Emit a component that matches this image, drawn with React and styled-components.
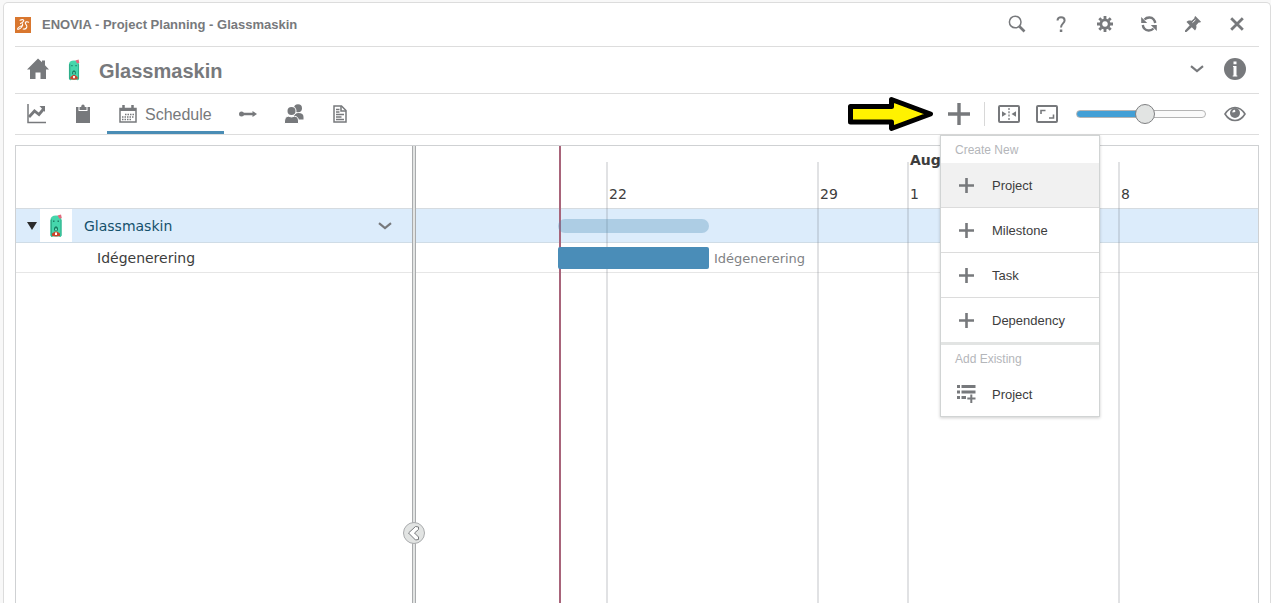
import React, { useState } from "react"
import styled, { createGlobalStyle } from "styled-components"

const GlobalStyle = createGlobalStyle`
  * {
    box-sizing: border-box;
  }

  body {
    margin: 0;
    background: #f8f8f8;
    color: #77797c;
    font-family: "Liberation Sans", Arial, sans-serif;
  }

  button {
    margin: 0;
    padding: 0;
    border: 0;
    background: none;
    color: inherit;
    font: inherit;
    cursor: pointer;
  }

  svg {
    display: block;
    flex: none;
  }
`

const Page = styled.div`
  display: flex;
  min-height: 100vh;
  padding: 2px 0 0 3px;
`

const Panel = styled.main`
  flex: 1;
  min-width: 0;
  display: flex;
  flex-direction: column;
  padding: 0 11px;
  background: #fff;
  border: 1px solid #dcdcdc;
  border-bottom: 0;
  border-radius: 5px 5px 0 0;
`

const Bar = styled.header`
  display: flex;
  align-items: center;
  height: ${props => props.$height}px;
  border-bottom: 1px solid #dddddd;
`

const AppTitle = styled.span`
  flex: 1;
  margin-left: 11px;
  font-size: 13px;
  font-weight: bold;
`

const BarButton = styled.button`
  display: flex;
  align-items: center;
  justify-content: center;
  width: 44px;
  height: 42px;
`

const PlainButton = styled.button`
  display: flex;
  align-items: center;
`

const Heading = styled.div`
  flex: 1;
  display: flex;
  align-items: center;
  gap: 18px;
  padding-left: 12px;
`

const PageTitle = styled.h1`
  margin: 0;
  font-size: 20px;
  line-height: 24px;
  padding-top: 2px;
`

const HeadingActions = styled.div`
  display: flex;
  align-items: center;
  gap: 20px;
  padding: 0 13px 2px 0;
`

const Tabs = styled.nav`
  flex: 1;
  display: flex;
  align-items: stretch;
  align-self: stretch;
  gap: 2px;
`

const Tab = styled.button`
  display: flex;
  align-items: center;
  justify-content: center;
  gap: 8px;
  min-width: 44px;
  padding: 2px ${props => (props.$active ? "12px" : "0")} 0;
  font-size: 16px;
  border-bottom: 3px solid
    ${props => (props.$active ? "#4a8db5" : "transparent")};
`

const TabText = styled.span`
  padding-top: 3px;
`

const Tools = styled.div`
  display: flex;
  align-items: center;
  padding-right: 13px;
`

const CreateWrap = styled.div`
  position: relative;
  margin: 0 14px;
`

const Divider = styled.span`
  width: 1px;
  height: 24px;
  margin-right: 13px;
  background: #d8d8d8;
`

const ToolGroup = styled.div`
  display: flex;
  align-items: center;
  gap: 16px;
`

const Slider = styled.input`
  appearance: none;
  width: 130px;
  height: 20px;
  margin: 0 2px;
  background: none;

  &::-webkit-slider-runnable-track {
    height: 8px;
    border: 1px solid #b4b4b4;
    border-radius: 4px;
    background: linear-gradient(
      to right,
      #429fd6 ${props => props.value}%,
      #fafafa ${props => props.value}%
    );
  }

  &::-webkit-slider-thumb {
    appearance: none;
    width: 20px;
    height: 20px;
    margin-top: -7px;
    border: 1px solid #7f8082;
    border-radius: 50%;
    background: #e2e4e3;
  }
`

const Menu = styled.div`
  position: absolute;
  z-index: 5;
  top: 32px;
  left: -8px;
  width: 160px;
  background: #fff;
  border: 1px solid #d1d4d4;
  box-shadow: 0 1px 3px rgba(0, 0, 0, 0.2);
`

const MenuSection = styled.section`
  & + & {
    border-top: 3px solid #e2e4e3;
  }
`

const MenuLabel = styled.h2`
  margin: 0;
  padding: 2px 0 0 14px;
  color: #b4b6ba;
  font-size: 12px;
  font-weight: normal;
  line-height: 25px;
`

const MenuItem = styled.button`
  display: flex;
  align-items: center;
  gap: 15px;
  width: 100%;
  height: ${props => (props.$last ? 44 : 45)}px;
  padding-left: 16px;
  color: #3d3d3d;
  font-size: 13px;
  background: ${props => (props.$active ? "#f1f1f1" : "none")};
  border-bottom: ${props => (props.$last ? "0" : "1px solid #dcdcdc")};

  svg {
    color: #77797c;
  }
`

const Chart = styled.section`
  flex: 1;
  display: flex;
  margin-top: 10px;
  color: #3d3d3d;
  font-family: "DejaVu Sans", Verdana, sans-serif;
  font-size: 13px;
  border: 1px solid #cfd1d3;
  border-bottom: 0;
`

const Tree = styled.div`
  width: 396px;
`

const TreeHead = styled.div`
  height: 63px;
  border-bottom: 1px solid #d5dbe0;
`

const Row = styled.div`
  display: flex;
  align-items: center;
  height: ${props => (props.$root ? 34 : 30)}px;
  background: ${props => (props.$root ? "#dcecfb" : "none")};
  border-bottom: 1px solid ${props => (props.$root ? "#cfdce6" : "#e6e6e6")};
`

const Toggle = styled.button`
  width: 16px;
  margin-left: 8px;
  display: flex;
  justify-content: center;
`

const Thumb = styled.span`
  display: flex;
  align-items: center;
  justify-content: center;
  width: 32px;
  height: 33px;
  background: #fff;
`

const RowName = styled.span`
  flex: 1;
  padding-left: ${props => (props.$root ? 12 : 81)}px;
  color: ${props => (props.$root ? "#14506b" : "inherit")};
  font-size: 14px;
`

const RowMenu = styled.button`
  margin-right: 20px;
  color: #77797c;
`

const Splitter = styled.div`
  position: relative;
  width: 4px;
  background: #e2e4e3;
  border: solid #a9abad;
  border-width: 0 1px;
`

const Collapse = styled.button`
  position: absolute;
  z-index: 2;
  top: 376px;
  left: -10px;
`

const Timeline = styled.div`
  position: relative;
  flex: 1;
  min-width: 0;
  overflow: hidden;
`

const TimeHead = styled.div`
  height: 63px;
  border-bottom: 1px solid #d5dbe0;
`

const Tick = styled.div`
  position: absolute;
  top: 16px;
  bottom: 0;
  border-left: 2px solid rgba(120, 125, 130, 0.22);
  padding: 24px 0 0 1px;
  font-size: 14px;
  line-height: 16px;
`

const Month = styled.div`
  position: absolute;
  top: 6px;
  font-size: 14px;
  font-weight: bold;
  line-height: 16px;
`

const Today = styled.div`
  position: absolute;
  top: 0;
  bottom: 0;
  width: 2px;
  background: #a8647a;
`

const SummaryBar = styled.div`
  position: absolute;
  top: 73px;
  height: 14px;
  border-radius: 7px;
  background: rgba(74, 141, 181, 0.32);
`

const TaskBar = styled.div`
  position: absolute;
  z-index: 1;
  top: 101px;
  height: 22px;
  border-radius: 2px;
  background: #4a8db8;
`

const TaskLabel = styled.span`
  position: absolute;
  top: 105px;
  color: #808285;
  font-size: 13px;
  line-height: 16px;
`

const Svg = ({ w = 20, h = w, box, children }) => (
  <svg
    width={w}
    height={h}
    viewBox={box || `0 0 ${w} ${h}`}
    fill="currentColor"
    aria-hidden="true"
  >
    {children}
  </svg>
)

const Line = props => <path fill="none" stroke="currentColor" {...props} />

const LogoIcon = () => (
  <Svg w={16}>
    <path d="M0 0h16v16H0z" fill="#d9772f" />
    <Line
      stroke="#fff"
      strokeWidth="1.1"
      strokeLinecap="round"
      strokeLinejoin="round"
      d="M5 3.200c2.500-1 4.300-.6 3.600.8C8 5.200 6.800 6 5.500 6.600M7.600 6.800c.6 2-1.600 4.700-4 5.400-1.300.4-1.400-.3-.6-1.200C4.300 9.600 6 8.800 7.600 8.500M13.600 5.200c-1.600-.9-3.600-.3-3.300 1 .3 1.300 2 2.200 1.500 3.800-.4 1.500-2 2.300-3.600 2"
    />
  </Svg>
)

const BottleIcon = ({ w = 14, h = 22 }) => (
  <Svg w={w} h={h} box="0 0 14 24">
    <path
      d="M1.500 21.500V6q0-4.500 5.500-4.500T12.500 6v15.500q-1 2.500-2.500 1H4q-1.500 1.500-2.500-1z"
      fill="#45d6ac"
    />
    <path d="M1.500 6v15.500L3 23V5zM11.500 5v18l1-1.500V6z" fill="#2fae8a" />
    <path d="M8.500 1.500l3.500-1 .8 3.500-2.300.8z" fill="#e26a7c" />
    <path d="M4 6.500h1.500V8H4zM8.500 6.500H10V8H8.500z" fill="#1e8068" />
    <path d="M5 14q2-3.500 4 0v2.500H5z" fill="#177c60" />
    <path d="M6 14.500h2V16H6z" fill="#68e0bc" />
    <path d="M3 19.500l3-2h2l3 2V22l-4 .5L3 22z" fill="#c8452c" />
    <path d="M6 18.500h2V21H6z" fill="#fff" />
  </Svg>
)

const HomeIcon = () => (
  <Svg w={22} h={24}>
    <path d="M11 .5l4 3.800V2.500h3v4.700l4 4.300h-3V21h-5.500v-6.500h-5V21H3v-9.500H0z" />
  </Svg>
)

const SearchIcon = () => (
  <Svg w={18} h={20}>
    <Line d="M13 7A5.800 5.800 0 1 1 1.400 7 5.800 5.800 0 0 1 13 7z" strokeWidth="1.500" />
    <Line d="M11.500 11.500l5 5" strokeWidth="2.600" />
  </Svg>
)

const HelpIcon = () => (
  <Svg w={10} h={18}>
    <Line d="M1.500 4.500C1.500 2.500 3 1.200 5 1.200s3.600 1.200 3.600 3.200C8.600 7.400 5 7.500 5 11.500" strokeWidth="2" />
    <path d="M3.800 13.500h2.500V16H3.800z" />
  </Svg>
)

const GearIcon = () => (
  <Svg w={16} h={18}>
    <Line d="M8 3.800a4.200 4.200 0 1 0 .01 0z" strokeWidth="2.800" />
    <Line
      d="M8 0v3M8 13v3M0 8h3M13 8h3M2.300 2.300l2 2M11.700 11.700l2 2M2.300 13.700l2-2M11.700 4.300l2-2"
      strokeWidth="2.800"
    />
  </Svg>
)

const RefreshIcon = () => (
  <Svg w={16} h={18}>
    <Line
      d="M3.500 3.500C6 1 10.500.9 12.500 3.200 13.500 4.300 14 5.300 14.200 7M12.500 12.500C10 15 5.500 15.100 3.500 12.800 2.500 11.700 2 10.700 1.800 9"
      strokeWidth="2.400"
    />
    <path d="M.2 1v6h6zM15.800 15V9h-6z" />
  </Svg>
)

const PinIcon = () => (
  <Svg w={16} h={18}>
    <path d="M10.300 0L16 5.700c-.6.700-1.300 1-2.300.9L11.200 9.300c.6 2.100.2 3.800-1.200 5.200L6.800 11.300 1.500 16H0v-1.500l4.700-5.300L1.500 6c1.400-1.400 3.100-1.800 5.200-1.200L9.400 2.300C9.300 1.300 9.600.6 10.300 0z" />
    <Line stroke="#fff" d="M7.500 6.600l3-2.800" strokeWidth="1" />
  </Svg>
)

const CloseIcon = () => (
  <Svg w={14} h={16}>
    <Line d="M1.200 1.200l11.600 11.600M12.800 1.200L1.200 12.800" strokeWidth="2.800" />
  </Svg>
)

const ChevronIcon = () => (
  <Svg w={14} h={8}>
    <Line d="M1 1.200l6 4.800 6-4.800" strokeWidth="2.200" />
  </Svg>
)

const InfoIcon = () => (
  <Svg w={22}>
    <circle cx="11" cy="11" r="11" />
    <path d="M9.500 3.500h3v2.800h-3zM9 8h3.500v9.500h.8v1H8.700v-1h.8V9H9z" fill="#fff" />
  </Svg>
)

const TrendIcon = () => (
  <Svg w={20}>
    <Line d="M1 0v18.500h18" strokeWidth="1.500" />
    <Line d="M2 13l5.500-6 4.500 3.500 5-6" strokeWidth="2.800" />
    <path d="M12.500 2H18v6z" />
  </Svg>
)

const ClipboardIcon = () => (
  <Svg w={14} h={20}>
    <path d="M0 3h2.500v4h9V3H14v16H0z" />
    <path d="M3.500 6V3h1.700C5.200-.3 8.800-.3 8.800 3h1.700v3z" />
  </Svg>
)

const CalendarIcon = () => (
  <Svg w={18}>
    <Line d="M1 3.500h16V17H1z" strokeWidth="1.500" />
    <Line d="M1 4.500h16" strokeWidth="3" />
    <Line d="M4.500 0v5M13.500 0v5" strokeWidth="2.500" />
    <Line
      d="M6 9.500h9M3 12h12M3 14.500h9"
      strokeWidth="1.400"
      strokeDasharray="1.500 1"
    />
  </Svg>
)

const DependencyIcon = () => (
  <Svg w={18} h={8}>
    <circle cx="2.500" cy="4" r="2.500" />
    <path d="M3 2.800h10.500V1L18 4l-4.500 3V5.200H3z" />
  </Svg>
)

const PeopleIcon = () => (
  <Svg w={20}>
    <circle cx="14" cy="4.300" r="4" />
    <path d="M9.500 15.500v-3q1-3.500 5-3.500 5 0 5 4v2.500z" />
    <circle cx="7.500" cy="7" r="5" fill="#fff" />
    <circle cx="7.500" cy="7" r="4" />
    <path
      d="M.5 19.500V17q.5-4.800 4-4.800l3 .8 3-.8q4 .3 4 4.800v2.500z"
      stroke="#fff"
      strokeWidth="1"
    />
  </Svg>
)

const DocumentIcon = () => (
  <Svg w={14} h={18}>
    <Line d="M1 1h7.500L13 5.500V17H1z" strokeWidth="1.500" />
    <Line d="M8 1v5h5" strokeWidth="1.500" />
    <Line d="M3 4.500h3.500M3 7h3.500M3 9.500h8M3 12h5.500M3 14.500h8" strokeWidth="1.400" />
  </Svg>
)

const PlusIcon = () => (
  <Svg w={22}>
    <Line d="M11 0v22M0 11h22" strokeWidth="3.400" />
  </Svg>
)

const SmallPlusIcon = () => (
  <Svg w={20}>
    <Line d="M9.500 3v15M2 10.500h15" strokeWidth="2.600" />
  </Svg>
)

const FitIcon = () => (
  <Svg w={22} h={18}>
    <rect x="1" y="1" width="20" height="16" rx="1" fill="none" stroke="currentColor" strokeWidth="2" />
    <Line d="M11 3v12" strokeWidth="1.300" strokeDasharray="2 1.300" />
    <path d="M4 6.300L8.500 9 4 11.700zM18 6.300L13.500 9l4.500 2.700z" />
  </Svg>
)

const FullscreenIcon = () => (
  <Svg w={22} h={18}>
    <rect x="1" y="1" width="20" height="16" rx="1" fill="none" stroke="currentColor" strokeWidth="2" />
    <Line d="M5 9V5.500h4.500M17.500 9.500V13H13" strokeWidth="1.600" />
  </Svg>
)

const EyeIcon = () => (
  <Svg w={22} h={16}>
    <Line d="M1 8Q5 1.500 11 1.500T21 8Q17 14.500 11 14.500T1 8z" strokeWidth="1.600" />
    <circle cx="11" cy="7" r="5" />
    <path d="M8.300 6.500q0-2.500 2.700-2.800l.3 2.300z" fill="#fff" />
  </Svg>
)

const ListAddIcon = () => (
  <Svg w={20}>
    <path d="M0 1h3v3H0zM4.500 1h14v3h-14zM0 6.500h3v3H0zM4.500 6.500h14v3h-14zM0 12h3v3H0zM4.500 12H9v3H4.500z" />
    <Line d="M14.300 10.500V19M10.300 14.500h8.200" strokeWidth="2" />
  </Svg>
)

const ArrowCallout = () => (
  <Svg w={86} h={36}>
    <path
      d="M2.500 10.500h41v-7L82.500 18 43.500 32.500V26h-41z"
      fill="#fff200"
      stroke="#000"
      strokeWidth="5"
      strokeLinejoin="round"
    />
  </Svg>
)

const CollapseIcon = () => (
  <Svg w={22}>
    <circle cx="11" cy="11" r="10.500" fill="#e2e4e3" stroke="#a9abad" />
    <path
      d="M12.500 4.500l3 .5v2.500L11.500 11l4 4v2.500l-3 .5L5.500 11z"
      fill="#fff"
      stroke="#77797c"
      strokeLinejoin="round"
    />
  </Svg>
)

const actions = [
  { name: "Search", Icon: SearchIcon },
  { name: "Help", Icon: HelpIcon },
  { name: "Preferences", Icon: GearIcon },
  { name: "Refresh", Icon: RefreshIcon },
  { name: "Pin", Icon: PinIcon },
  { name: "Close", Icon: CloseIcon },
]

const tabs = [
  { name: "Dashboard", Icon: TrendIcon },
  { name: "Properties", Icon: ClipboardIcon },
  { name: "Schedule", Icon: CalendarIcon, active: true },
  { name: "Dependencies", Icon: DependencyIcon },
  { name: "Members", Icon: PeopleIcon },
  { name: "Documents", Icon: DocumentIcon },
]

const createItems = ["Project", "Milestone", "Task", "Dependency"]

const ticks = [
  { label: "22", left: 190 },
  { label: "29", left: 401 },
  { label: "1", left: 491 },
  { label: "8", left: 702 },
]

const today = 143
const task = { name: "Idégenerering", left: 142, width: 151 }

const App = () => {
  const [zoom, setZoom] = useState(54)
  const [menuOpen, setMenuOpen] = useState(true)

  return (
    <Page>
      <GlobalStyle />
      <Panel>
        <Bar $height={44}>
          <LogoIcon />
          <AppTitle>ENOVIA - Project Planning - Glassmaskin</AppTitle>
          {actions.map(({ name, Icon }) => (
            <BarButton key={name} aria-label={name}>
              <Icon />
            </BarButton>
          ))}
        </Bar>

        <Bar $height={47}>
          <Heading>
            <PlainButton aria-label="Home">
              <HomeIcon />
            </PlainButton>
            <BottleIcon />
            <PageTitle>Glassmaskin</PageTitle>
          </Heading>
          <HeadingActions>
            <PlainButton aria-label="Expand">
              <ChevronIcon />
            </PlainButton>
            <PlainButton aria-label="Information">
              <InfoIcon />
            </PlainButton>
          </HeadingActions>
        </Bar>

        <Bar as="div" $height={41}>
          <Tabs>
            {tabs.map(({ name, Icon, active }) => (
              <Tab key={name} $active={active} aria-label={name}>
                <Icon />
                {active && <TabText>{name}</TabText>}
              </Tab>
            ))}
          </Tabs>
          <Tools>
            <ArrowCallout />
            <CreateWrap>
              <PlainButton
                aria-label="Create"
                aria-expanded={menuOpen}
                onClick={() => setMenuOpen(!menuOpen)}
              >
                <PlusIcon />
              </PlainButton>
              {menuOpen && (
                <Menu>
                  <MenuSection>
                    <MenuLabel>Create New</MenuLabel>
                    {createItems.map((item, i) => (
                      <MenuItem
                        key={item}
                        $active={i === 0}
                        $last={i === createItems.length - 1}
                      >
                        <SmallPlusIcon />
                        {item}
                      </MenuItem>
                    ))}
                  </MenuSection>
                  <MenuSection>
                    <MenuLabel>Add Existing</MenuLabel>
                    <MenuItem $last>
                      <ListAddIcon />
                      Project
                    </MenuItem>
                  </MenuSection>
                </Menu>
              )}
            </CreateWrap>
            <Divider />
            <ToolGroup>
              <PlainButton aria-label="Fit columns">
                <FitIcon />
              </PlainButton>
              <PlainButton aria-label="Full view">
                <FullscreenIcon />
              </PlainButton>
              <Slider
                type="range"
                aria-label="Zoom"
                value={zoom}
                onChange={e => setZoom(Number(e.target.value))}
              />
              <PlainButton aria-label="Visibility">
                <EyeIcon />
              </PlainButton>
            </ToolGroup>
          </Tools>
        </Bar>

        <Chart>
          <Tree>
            <TreeHead />
            <Row $root>
              <Toggle aria-label="Collapse Glassmaskin">
                <Svg w={10} h={8}>
                  <path d="M0 0h10L5 8z" fill="#2b2b2b" />
                </Svg>
              </Toggle>
              <Thumb>
                <BottleIcon w={14} h={26} />
              </Thumb>
              <RowName $root>Glassmaskin</RowName>
              <RowMenu aria-label="Glassmaskin actions">
                <ChevronIcon />
              </RowMenu>
            </Row>
            <Row>
              <RowName>{task.name}</RowName>
            </Row>
          </Tree>
          <Splitter>
            <Collapse aria-label="Collapse list">
              <CollapseIcon />
            </Collapse>
          </Splitter>
          <Timeline>
            <TimeHead />
            <Row $root />
            <Row />
            {ticks.map(({ label, left }) => (
              <Tick key={label} style={{ left }}>
                {label}
              </Tick>
            ))}
            <Month style={{ left: 494 }}>August</Month>
            <Today style={{ left: today }} />
            <SummaryBar style={{ left: task.left, width: task.width }} />
            <TaskBar style={{ left: task.left, width: task.width }} />
            <TaskLabel style={{ left: task.left + task.width + 5 }}>
              {task.name}
            </TaskLabel>
          </Timeline>
        </Chart>
      </Panel>
    </Page>
  )
}

export default App
